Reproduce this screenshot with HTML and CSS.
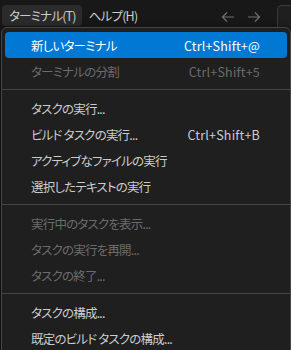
FILE: index.html
```html
<!DOCTYPE html>
<html>
<head>
  <meta charset="utf-8">
  <title>Terminal menu</title>
  <link rel="stylesheet" href="styles.css">
</head>
<body>

<!-- title bar -->
<div class="titlebar">
  <div class="topitem active">ターミナル(T)</div>
  <div class="topitem">ヘルプ(H)</div>
  <div class="spacer"></div>
  <div class="nav">
    <svg width="16" height="16" viewBox="0 0 16 16"><path d="M14 8H2.5M7 3.5L2.5 8L7 12.5" fill="none" stroke="#6f6f6f" stroke-width="1.2"/></svg>
    <svg width="16" height="16" viewBox="0 0 16 16"><path d="M2 8h11.5M9 3.5L13.5 8L9 12.5" fill="none" stroke="#6f6f6f" stroke-width="1.2"/></svg>
  </div>
  <div class="search"></div>
</div>

<!-- dropdown -->
<div class="menu">
  <div class="item selected"><span>新しいターミナル</span><span class="key">Ctrl+Shift+@</span></div>
  <div class="item disabled"><span>ターミナルの分割</span><span class="key">Ctrl+Shift+5</span></div>
  <div class="sep"></div>
  <div class="item"><span>タスクの実行...</span></div>
  <div class="item"><span>ビルド タスクの実行...</span><span class="key">Ctrl+Shift+B</span></div>
  <div class="item"><span>アクティブなファイルの実行</span></div>
  <div class="item"><span>選択したテキストの実行</span></div>
  <div class="sep"></div>
  <div class="item disabled"><span>実行中のタスクを表示...</span></div>
  <div class="item disabled"><span>タスクの実行を再開...</span></div>
  <div class="item disabled"><span>タスクの終了...</span></div>
  <div class="sep"></div>
  <div class="item"><span>タスクの構成...</span></div>
  <div class="item"><span>既定のビルド タスクの構成...</span></div>
</div>

</body>
</html>
```

FILE: styles.css
```css
body {
  margin: 0;
  background-color: #181818;
  font-family: "Noto Sans CJK JP", "Noto Sans", sans-serif;
  font-feature-settings: "palt";
  font-size: 12.5px;
  letter-spacing: -0.8px;
  color: #cccccc;
  overflow: hidden;
}
.titlebar {
  display: flex;
  align-items: flex-start;
  height: 31px;
  padding-left: 2px;
  background-color: #181818;
}
.topitem {
  height: 21px;
  line-height: 21px;
  padding: 0 6px 0 7px;
  margin-top: 5px;
  border-radius: 4px;
}
.topitem.active {
  background-color: #2b2b2b;
}
.spacer {
  flex: 1;
}
.nav {
  display: flex;
  gap: 10px;
  margin-top: 9px;
  margin-right: 15px;
}
.search {
  width: 13px;
  height: 30px;
  margin-top: 5px;
  border: 1px solid #3c3c3c;
  border-right: none;
  border-radius: 5px 0 0 5px;
  background-color: #1f1f1f;
}
.menu {
  position: absolute;
  left: 1px;
  top: 27px;
  width: 288px;
  padding: 4px 0;
  background-color: #1f1f1f;
  border: 1px solid #454545;
  border-radius: 6px;
  box-shadow: 0 2px 8px rgba(0, 0, 0, 0.6);
}
.item {
  display: flex;
  justify-content: space-between;
  align-items: center;
  height: 26px;
  margin: 0 3px;
  padding: 0 27px 0 26px;
  border-radius: 4px;
  color: #cccccc;
}
.item .key {
  letter-spacing: 0.2px;
}
.item.selected {
  background-color: #0078d4;
  color: #ffffff;
}
.item.disabled {
  color: #6b6b6b;
}
.sep {
  height: 1px;
  margin: 5px 0;
  background-color: #454545;
}
```
